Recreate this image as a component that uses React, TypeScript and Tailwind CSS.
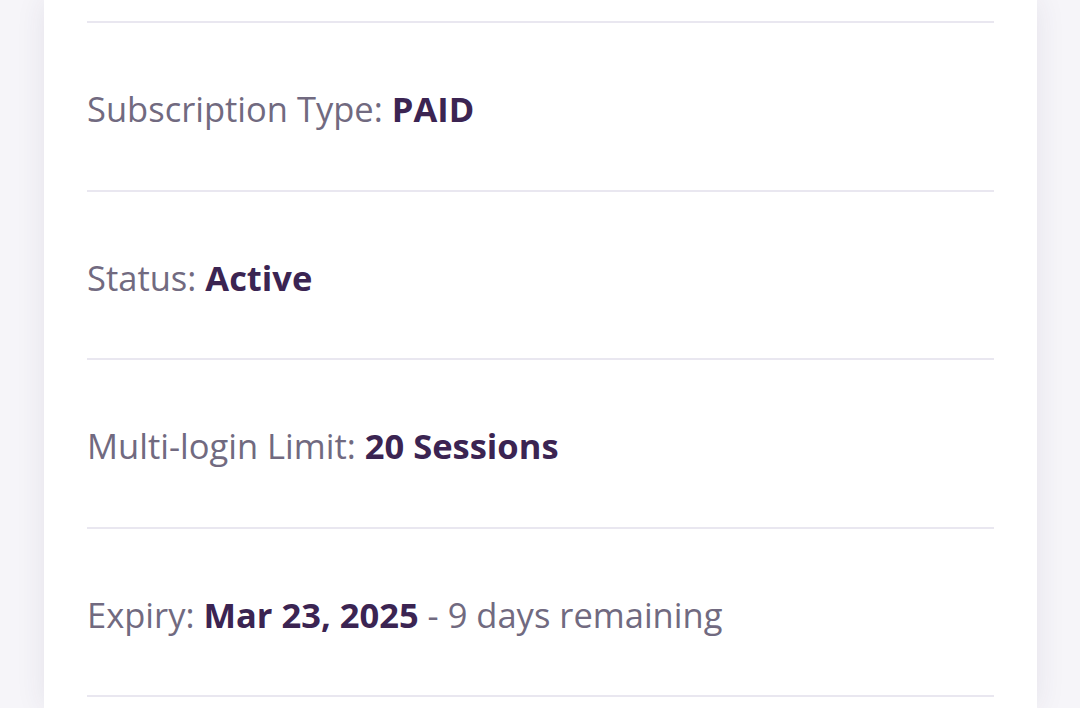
import React from "react";

type Row = { label: string; value: string; suffix?: string; h: string };

const rows: Row[] = [
  { label: "Subscription Type:", value: "PAID", h: "h-[169px]" },
  { label: "Status:", value: "Active", h: "h-[168px]" },
  { label: "Multi-login Limit:", value: "20 Sessions", h: "h-[169px]" },
  { label: "Expiry:", value: "Mar 23, 2025", suffix: "- 9 days remaining", h: "h-[168px]" },
];

export default function App() {
  return (
    <div
      className="w-[1080px] h-[708px] overflow-hidden bg-[#f6f5f9] pl-[44px] pr-[43px]"
      style={{ fontFamily: '"Open Sans", "Noto Sans", sans-serif' }}
    >
      <div className="h-full bg-white shadow-[0_0_28px_rgba(60,40,90,0.09)] px-[43px]">
        <div className="h-[21px]" />
        {rows.map((r) => (
          <div
            key={r.label}
            className={`${r.h} border-t-2 border-[#e9e7f0] flex items-center text-[34.5px] leading-none text-[#716a80] pt-[6px]`}
          >
            <span>
              {r.label}{" "}
              <span className="font-bold text-[#3b2452]">{r.value}</span>
              {r.suffix ? <> {r.suffix}</> : null}
            </span>
          </div>
        ))}
        <div className="border-t-2 border-[#e9e7f0]" />
      </div>
    </div>
  );
}
